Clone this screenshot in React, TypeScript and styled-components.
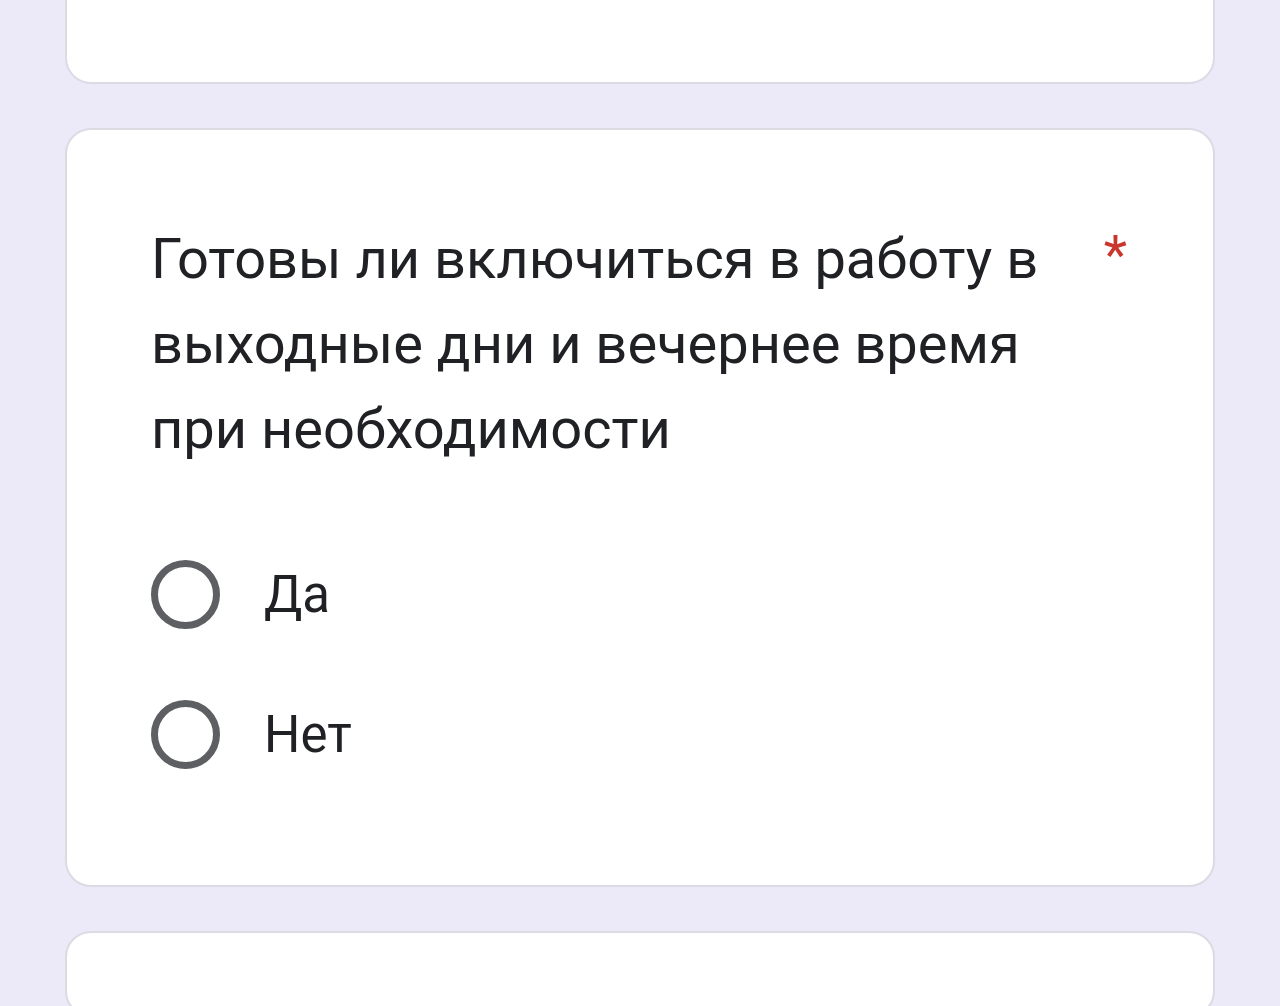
import React, { FC } from "react";
import styled, { createGlobalStyle } from "styled-components";

const GlobalStyle = createGlobalStyle`
  html, body {
    margin: 0;
    padding: 0;
    background: #eceaf9;
  }
  body {
    font-family: Roboto, "Noto Sans", Arial, sans-serif;
    color: #202124;
  }
`;

type OptionProps = {
  label: string;
};

const Option: FC<OptionProps> = ({ label }) => (
  <OptionRow>
    <Radio />
    <OptionLabel>{label}</OptionLabel>
  </OptionRow>
);

const App: FC = () => {
  return (
    <>
      <GlobalStyle />
      <Page>
        <Card $cutTop>
          <Spacer />
        </Card>
        <Card>
          <QuestionBody>
            <TitleRow>
              <Title>
                Готовы ли включиться в работу в выходные дни и вечернее время
                при необходимости
              </Title>
              <Required>*</Required>
            </TitleRow>
            <Options>
              <Option label="Да" />
              <Option label="Нет" />
            </Options>
          </QuestionBody>
        </Card>
        <Card>
          <Spacer />
        </Card>
      </Page>
    </>
  );
};

export default App;

const Page = styled.div`
  height: 1006px;
  overflow: hidden;
  padding: 0 65px 0 65px;
  display: flex;
  flex-direction: column;
  gap: 44px;
  box-sizing: border-box;
`;

const Card = styled.div<{ $cutTop?: boolean }>`
  flex-shrink: 0;
  background: #ffffff;
  border: 2px solid #dadbe3;
  border-radius: 26px;
  box-sizing: border-box;
  ${(p) =>
    p.$cutTop &&
    `
    border-top: none;
    border-top-left-radius: 0;
    border-top-right-radius: 0;
  `}
`;

const Spacer = styled.div`
  height: 82px;
`;

const QuestionBody = styled.div`
  padding: 87px 86px 116px 84px;
`;

const TitleRow = styled.div`
  display: flex;
  align-items: flex-start;
  justify-content: space-between;
`;

const Title = styled.div`
  font-size: 56px;
  line-height: 85px;
  max-width: 960px;
  font-weight: 400;
`;

const Required = styled.span`
  color: #c9362d;
  font-size: 54px;
  line-height: 85px;
  margin-top: -5px;
`;

const Options = styled.div`
  display: flex;
  flex-direction: column;
  gap: 71px;
  margin-top: 88px;
`;

const OptionRow = styled.label`
  display: flex;
  align-items: center;
  gap: 44px;
  cursor: pointer;
`;

const Radio = styled.span`
  width: 69px;
  height: 69px;
  border: 7px solid #5d5f62;
  border-radius: 50%;
  box-sizing: border-box;
  flex-shrink: 0;
`;

const OptionLabel = styled.span`
  font-size: 51px;
  line-height: 56px;
`;
